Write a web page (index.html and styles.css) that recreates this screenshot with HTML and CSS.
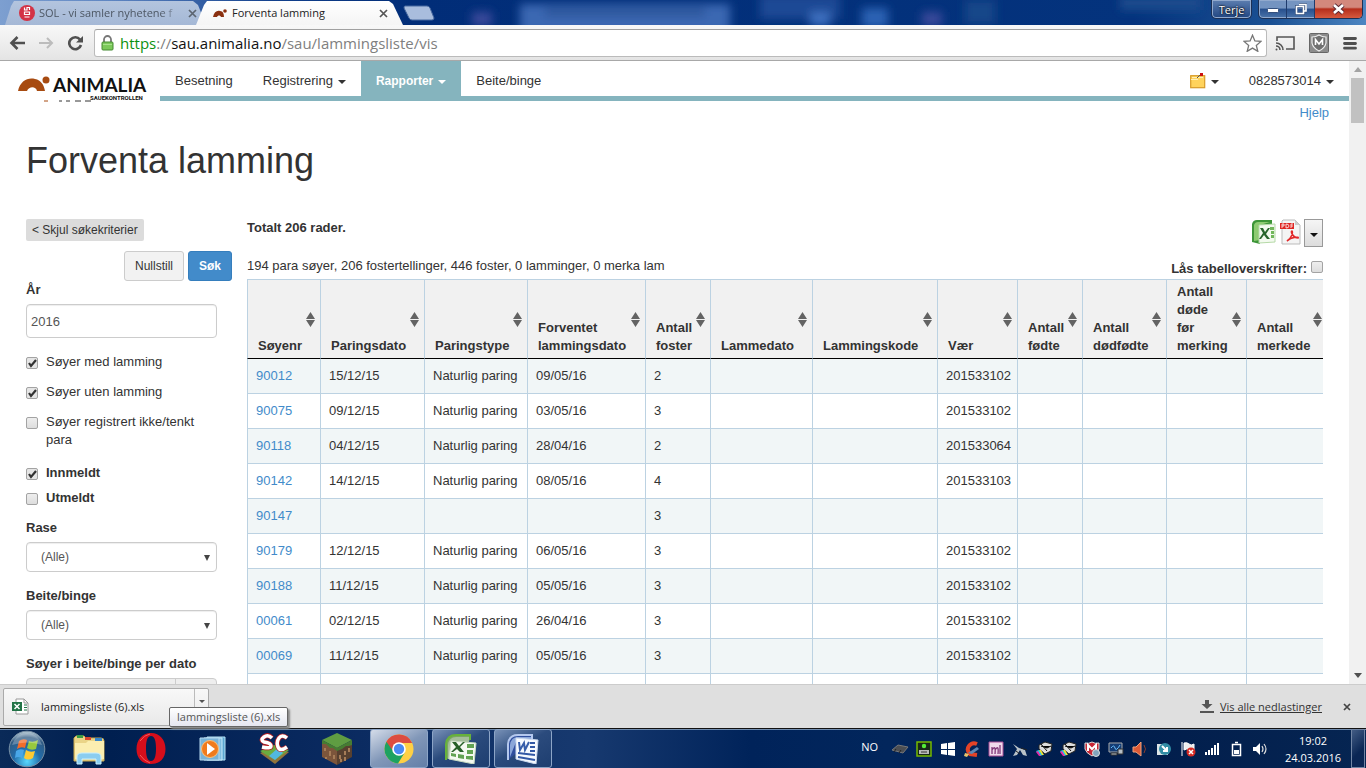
FILE: index.html
```html
<!DOCTYPE html>
<html lang="no">
<head>
<meta charset="utf-8">
<title>Forventa lamming</title>
<link rel="stylesheet" href="styles.css">
</head>
<body>
<header class="titlebar">
  <svg class="glass" viewBox="0 0 1366 25" preserveAspectRatio="none" aria-hidden="true">
    <defs>
      <filter id="soft" x="-20%" y="-50%" width="140%" height="200%"><feGaussianBlur stdDeviation="5"/></filter>
      <linearGradient id="sky"><stop offset="0" stop-color="#7d9fd0"/><stop offset=".08" stop-color="#5f86c2"/><stop offset=".2" stop-color="#12408c"/><stop offset=".3" stop-color="#012d78"/><stop offset=".83" stop-color="#04337d"/><stop offset=".93" stop-color="#1a5093"/><stop offset="1" stop-color="#4d86c2"/></linearGradient>
    </defs>
    <rect width="1366" height="25" fill="url(#sky)"/>
    <g filter="url(#soft)">
      <rect x="520" y="4" width="210" height="30" fill="#3a68b2"/>
      <rect x="545" y="8" width="160" height="8" fill="#2a5298"/>
      <rect x="760" y="-5" width="80" height="24" fill="#1d4a95"/>
      <rect x="472" y="12" width="20" height="14" fill="#3b4a9b"/>
      <rect x="810" y="12" width="20" height="14" fill="#3c70c0"/>
      <rect x="862" y="8" width="26" height="20" fill="#2c62b4"/>
      <rect x="922" y="12" width="20" height="14" fill="#3b4a9b"/>
      <rect x="1120" y="-4" width="80" height="14" fill="#1b4b8d"/>
      <rect x="965" y="0" width="30" height="24" fill="#174689"/>
    </g>
  </svg>
  <div class="tabs">
    <div class="tab">
      <svg width="16" height="16" viewBox="0 0 16 16"><circle cx="8" cy="8" r="8" fill="#d33245"/><g fill="none" stroke="#fff" stroke-width="1.200"><path d="M5.500 2.500v2.500h2.500V2.500h2.500V5M5.500 7h5v2.500h-5zM5.500 12h5"/></g></svg>
      <span class="tab-title fade">SOL - vi samler nyhetene f</span>
      <button class="tab-close" aria-label="Lukk fane"><svg width="9" height="9" viewBox="0 0 9 9"><path d="M1 1l7 7M8 1L1 8" stroke="#5b6470" stroke-width="1.700"/></svg></button>
    </div>
    <div class="tab current">
      <svg width="14" height="16" viewBox="0 0 14 16"><path d="M0 12C1 7 4 5 7 6c3 0 4 3 4 6H8c-1-2-3-2-4 0z" fill="#8a3010"/><circle cx="12" cy="6" r="1.800" fill="#8a3010"/></svg>
      <span class="tab-title">Forventa lamming</span>
      <button class="tab-close" aria-label="Lukk fane"><svg width="9" height="9" viewBox="0 0 9 9"><path d="M1 1l7 7M8 1L1 8" stroke="#555" stroke-width="1.700"/></svg></button>
    </div>
    <button class="newtab" aria-label="Ny fane"><svg width="32" height="16" viewBox="0 0 32 16"><path d="M2 1h22q2 0 3 2l4 10q0 2-2 2H9q-2 0-3-2L1 3q0-2 1-2z" fill="#a9bddd" stroke="#47689f"/></svg></button>
  </div>
  <div class="window-buttons">
    <button class="user">Terje</button>
    <div class="group">
      <button aria-label="Minimer"><svg width="12" height="12" viewBox="0 0 12 12"><rect x=".5" y="5.500" width="11" height="4" rx="1" fill="#fff" stroke="#334f7d"/></svg></button>
      <button aria-label="Gjenopprett"><svg width="12" height="12" viewBox="0 0 12 12"><path d="M4 1h7v7H9M1.500 3.500h7v7h-7z" fill="none" stroke="#334f7d" stroke-width="3"/><path d="M4 1.500h7V8H9M1.500 3.500h7v7h-7z" fill="none" stroke="#fff" stroke-width="1.600"/></svg></button>
      <button class="close" aria-label="Lukk"><svg width="13" height="12" viewBox="0 0 13 12"><path d="M2 2l9 8M11 2L2 10" stroke="#5a2b35" stroke-width="4.500"/><path d="M2 2l9 8M11 2L2 10" stroke="#fff" stroke-width="2.600"/></svg></button>
    </div>
  </div>
</header>

<div class="toolbar">
  <button aria-label="Tilbake"><svg width="17" height="16" viewBox="0 0 17 16"><path d="M16 8H3M8.500 2L2.500 8l6 6" fill="none" stroke="#505050" stroke-width="2.600"/></svg></button>
  <button aria-label="Frem"><svg width="17" height="16" viewBox="0 0 17 16"><path d="M1 8h13M9 3l5 5-5 5" fill="none" stroke="#bcbcbc" stroke-width="2"/></svg></button>
  <button aria-label="Last inn på nytt"><svg width="17" height="16" viewBox="0 0 17 16"><path d="M13 4.500A6 6 0 1 0 14 10" fill="none" stroke="#505050" stroke-width="2.600"/><path d="M9 7.500h7V1z" fill="#505050"/></svg></button>
  <div class="omnibox">
    <svg width="13" height="16" viewBox="0 0 13 16"><path d="M3 8V4.500a3.500 3.500 0 0 1 7 0V8" fill="none" stroke="#777" stroke-width="1.800"/><rect x="1" y="7" width="11" height="8" rx="1" fill="#7cc95b" stroke="#448a32"/><path d="M2 9.500h9" stroke="#a9e18e"/></svg>
    <div class="url"><span class="secure">https</span>://<span class="host">sau.animalia.no</span>/sau/lammingsliste/vis</div>
    <button aria-label="Bokmerk"><svg width="19" height="18" viewBox="0 0 19 18"><path d="M9.500 1.200l2.400 5.700 6 .5-4.600 4 1.500 5.900-5.300-3.200-5.300 3.200 1.500-5.900-4.600-4 6-.5z" fill="#fff" stroke="#767676" stroke-width="1.300"/></svg></button>
  </div>
  <div class="extensions">
    <button aria-label="Cast"><svg width="20" height="16" viewBox="0 0 20 16"><path d="M2 6V2h17v12h-8" fill="none" stroke="#555" stroke-width="1.600"/><path d="M1 8a7 7 0 0 1 7 7M1 11a4 4 0 0 1 4 4" fill="none" stroke="#555" stroke-width="1.600"/><circle cx="1.500" cy="14.500" r="1" fill="#555"/></svg></button>
    <button aria-label="McAfee"><svg width="20" height="20" viewBox="0 0 20 20"><rect x=".5" y=".5" width="19" height="19" rx="1" fill="#8c8c8c" stroke="#666"/><path d="M3 4q4 0 7-2 3 2 7 2v6q-1 5-7 8-6-3-7-8z" fill="#707070" stroke="#eee" stroke-width="1.200"/><path d="M6.500 12V6.500l3.500 4.500 3.500-4.500V12" fill="none" stroke="#fff" stroke-width="1.600"/></svg></button>
    <button aria-label="Meny"><svg width="14" height="14" viewBox="0 0 14 14"><path d="M1.500 2.500h11M1.500 7.500h11M1.500 12.200h11" stroke="#4f4f4f" stroke-width="2.800" stroke-linecap="round"/></svg></button>
  </div>
</div>

<div class="viewport">
  <div class="page">
    <div class="topnav">
      <a class="logo" href="#" aria-label="Animalia Sauekontrollen">
        <svg width="150" height="41" viewBox="0 0 150 41"><path d="M17 30C19 20 27 16 34 18c6 1 9 6 10 12h-8c-1-5-8-5-10 0z" fill="#a74b11"/><circle cx="45" cy="19" r="3.500" fill="#a74b11"/><text x="52" y="31" class="logo-name">ANIMALIA</text><text x="89" y="39" class="logo-sub">SAUEKONTROLLEN</text><path d="M43 40h4" stroke="#a74b11"/><path d="M58 40h3m4 0h4m5 0h6m4 0h6" stroke="#333"/></svg>
      </a>
      <nav>
        <a href="#">Besetning</a>
        <a href="#">Registrering <i class="caret"></i></a>
        <a href="#" class="active">Rapporter <i class="caret"></i></a>
        <a href="#">Beite/binge</a>
        <a href="#" class="notes" aria-label="Notater"><svg width="16" height="17" viewBox="0 0 16 17"><rect x=".7" y="3.700" width="14" height="12" fill="#ffd35c" stroke="#d89b27" stroke-width="1.200"/><path d="M2 5.500h11M1 7.500h7" stroke="#fff0b5"/><path d="M7 6l3-3" stroke="#555"/><rect x="10" y="1" width="3" height="3" fill="#c11"/></svg><i class="caret"></i></a>
        <a href="#">0828573014 <i class="caret"></i></a>
      </nav>
    </div>
    <div class="help"><a href="#">Hjelp</a></div>
    <h1>Forventa lamming</h1>
    <div class="columns">
      <form class="search">
        <button type="button" class="hide">&lt; Skjul søkekriterier</button>
        <div class="actions"><button type="button" class="btn">Nullstill</button><button type="button" class="btn primary">Søk</button></div>
        <label class="title" for="year">År</label>
        <input class="field" id="year" type="text" value="2016">
        <div class="checks">
          <label><input type="checkbox" checked><span>Søyer med lamming</span></label>
          <label><input type="checkbox" checked><span>Søyer uten lamming</span></label>
          <label><input type="checkbox"><span>Søyer registrert ikke/tenkt para</span></label>
        </div>
        <div class="checks strong">
          <label><input type="checkbox" checked><span>Innmeldt</span></label>
          <label><input type="checkbox"><span>Utmeldt</span></label>
        </div>
        <label class="title" for="breed">Rase</label>
        <select class="field" id="breed"><option>(Alle)</option></select>
        <label class="title" for="pasture">Beite/binge</label>
        <select class="field" id="pasture"><option>(Alle)</option></select>
        <label class="title" for="date">Søyer i beite/binge per dato</label>
        <div class="date"><input id="date" type="text"><button type="button" aria-label="Velg dato"></button></div>
      </form>
      <main>
        <div class="total">
          <strong>Totalt 206 rader.</strong>
          <div class="exports">
            <button aria-label="Excel"><svg width="25" height="26" viewBox="0 0 25 26"><path d="M1 5q1-4 5-4h15v4L9 7v18l-8-2z" fill="#3d9538"/><path d="M3 6q1-3 4-3h12l-10 3v15l-6 1z" fill="#8ecb72"/><path d="M8 6l16-1v18L8 24z" fill="#f3faef" stroke="#b5d9a7"/><path d="M9 9h3l2 4 3-4h2l-4 6 4 5h-3l-3-4-3 4H8l4-6z" fill="#28652c"/><path d="M19 8h4v3h-4zm1 4h3v3h-3zm0 4h3v3h-3z" fill="#72b75b"/></svg></button>
            <button aria-label="PDF"><svg width="22" height="26" viewBox="0 0 22 26"><path d="M4 1h12l5 5v19H3V2z" fill="#f4f4f4" stroke="#bbb"/><path d="M16 1v5h5z" fill="#ccc"/><rect x="1" y="4" width="14" height="6" fill="#df2522"/><path d="M3 9V5h2v2H3m4 2V5q3 0 3 2t-3 2m5 0V5h2m-2 2h2" fill="none" stroke="#fff" stroke-width=".8"/><path d="M8 22c5-3 6-9 5-10-2 0 1 7 6 7 2-1-6-2-11 3z" fill="none" stroke="#e1292b" stroke-width="1.500"/></svg></button>
            <button class="more" aria-label="Flere valg"><i class="caret"></i></button>
          </div>
        </div>
        <div class="summary"><span>194 para søyer, 206 fostertellinger, 446 foster, 0 lamminger, 0 merka lam</span><label>Lås tabelloverskrifter: <input type="checkbox"></label></div>
        <div class="table-wrap">
        <table>
          <colgroup><col class="w73"><col class="w104"><col class="w103"><col class="w118"><col class="w65"><col class="w102"><col class="w125"><col class="w80"><col class="w65"><col class="w84"><col class="w80"><col class="w81"></colgroup>
          <thead><tr><th>Søyenr</th><th>Paringsdato</th><th>Paringstype</th><th>Forventet lammingsdato</th><th>Antall foster</th><th>Lammedato</th><th>Lammingskode</th><th>Vær</th><th>Antall fødte</th><th>Antall dødfødte</th><th>Antall<br>døde<br>før<br>merking</th><th>Antall merkede</th></tr></thead>
          <tbody>
            <tr><td><a href="#">90012</a></td><td>15/12/15</td><td>Naturlig paring</td><td>09/05/16</td><td>2</td><td></td><td></td><td>201533102</td><td></td><td></td><td></td><td></td></tr>
            <tr><td><a href="#">90075</a></td><td>09/12/15</td><td>Naturlig paring</td><td>03/05/16</td><td>3</td><td></td><td></td><td>201533102</td><td></td><td></td><td></td><td></td></tr>
            <tr><td><a href="#">90118</a></td><td>04/12/15</td><td>Naturlig paring</td><td>28/04/16</td><td>2</td><td></td><td></td><td>201533064</td><td></td><td></td><td></td><td></td></tr>
            <tr><td><a href="#">90142</a></td><td>14/12/15</td><td>Naturlig paring</td><td>08/05/16</td><td>4</td><td></td><td></td><td>201533103</td><td></td><td></td><td></td><td></td></tr>
            <tr><td><a href="#">90147</a></td><td></td><td></td><td></td><td>3</td><td></td><td></td><td></td><td></td><td></td><td></td><td></td></tr>
            <tr><td><a href="#">90179</a></td><td>12/12/15</td><td>Naturlig paring</td><td>06/05/16</td><td>3</td><td></td><td></td><td>201533102</td><td></td><td></td><td></td><td></td></tr>
            <tr><td><a href="#">90188</a></td><td>11/12/15</td><td>Naturlig paring</td><td>05/05/16</td><td>3</td><td></td><td></td><td>201533102</td><td></td><td></td><td></td><td></td></tr>
            <tr><td><a href="#">00061</a></td><td>02/12/15</td><td>Naturlig paring</td><td>26/04/16</td><td>3</td><td></td><td></td><td>201533102</td><td></td><td></td><td></td><td></td></tr>
            <tr><td><a href="#">00069</a></td><td>11/12/15</td><td>Naturlig paring</td><td>05/05/16</td><td>3</td><td></td><td></td><td>201533102</td><td></td><td></td><td></td><td></td></tr>
            <tr><td></td><td></td><td></td><td></td><td></td><td></td><td></td><td></td><td></td><td></td><td></td><td></td></tr>
          </tbody>
        </table>
        </div>
      </main>
    </div>
  </div>
  <div class="scrollbar" aria-hidden="true">
    <svg width="17" height="17" viewBox="0 0 17 17"><path d="M5 11l4-5 4 5z" fill="#a3a3a3"/></svg>
    <div class="thumb"></div>
    <svg class="down" width="17" height="17" viewBox="0 0 17 17"><path d="M5 6l4 5 4-5z" fill="#505050"/></svg>
  </div>
</div>

<div class="downloads">
  <div class="download">
    <button class="file"><svg width="17" height="17" viewBox="0 0 17 17"><path d="M4 1h8l4 4v11H4z" fill="#fff" stroke="#999"/><path d="M12 1v4h4" fill="none" stroke="#999"/><path d="M12 7h3m-3 2.500h3M12 12h3" stroke="#217346"/><rect y="4" width="10" height="9" fill="#217346"/><path d="M2.500 6l5 5m0-5l-5 5" stroke="#fff" stroke-width="1.500"/></svg>lammingsliste (6).xls</button>
    <button class="drop" aria-label="Meny"><i class="caret small"></i></button>
    <div class="tooltip" role="tooltip">lammingsliste (6).xls</div>
  </div>
  <a class="show-all" href="#"><svg width="14" height="13" viewBox="0 0 14 13"><path d="M5 0h4v4h3.500L7 9 1.500 4H5zM0 11h14v2H0z" fill="#555"/></svg><span>Vis alle nedlastinger</span></a>
  <button class="dismiss" aria-label="Lukk"><svg width="8" height="8" viewBox="0 0 8 8"><path d="M1 1l6 6M7 1L1 7" stroke="#444" stroke-width="1.700"/></svg></button>
</div>

<footer class="taskbar">
  <button class="start" aria-label="Start"><svg width="38" height="38" viewBox="0 0 38 38"><defs><radialGradient id="orb" cx=".5" cy=".85" r=".85"><stop offset="0" stop-color="#58d8ff"/><stop offset=".45" stop-color="#226ba8"/><stop offset=".8" stop-color="#315b83"/><stop offset="1" stop-color="#c4d5df"/></radialGradient></defs><circle cx="19" cy="19" r="17.800" fill="url(#orb)" stroke="#7890a5"/><path d="M11 11q4-3 8-1l-2 8q-4-2-8 1z" fill="#f26c2a"/><path d="M21 11q4 2 9-1l-2 9q-5 2-9-1z" fill="#97c93e"/><path d="M8 21q4-3 8-1l-2 8q-4-2-7 0z" fill="#49a7e8"/><path d="M18 20q4 3 9 1l-2 7q-5 3-9 0z" fill="#ffca32"/><path d="M4 15Q8 3 19 3t15 12q-15-5-30 0z" fill="#fff" opacity=".25"/></svg></button>
  <div class="apps">
    <button aria-label="Utforsker"><svg width="34" height="32" viewBox="0 0 34 32"><path d="M2 5l2-2h8l2 2h15q3 0 3 3v20H2z" fill="#ead487" stroke="#c7a850"/><rect x="5" y="2" width="6" height="3" fill="#3a9b43"/><rect x="13" y="4" width="6" height="3" fill="#d6452d"/><rect x="23" y="5" width="7" height="3" fill="#3685ca"/><path d="M3 10h11l2-2h16v18H3z" fill="#fbeeb0"/><path d="M5 31v-7q0-4 5-4h14q5 0 5 4v7h-5v-5H10v5z" fill="#8bcdf0" stroke="#c9efff"/></svg></button>
    <button aria-label="Opera"><svg width="30" height="32" viewBox="0 0 30 32"><path fill-rule="evenodd" d="M15 0C6 0 .5 7 .5 16S6 31 15 31s14.500-6 14.500-15S24 0 15 0zm0 3c4 0 5 6 5 12.500S19 28 15 28s-5-6-5-12.500S11 3 15 3z" fill="#d60e1b"/><path d="M4 8Q8 2 14 1M4 22q4 6 10 8" fill="none" stroke="#f65a5a"/></svg></button>
    <button aria-label="Media Player"><svg width="28" height="28" viewBox="0 0 28 28"><path d="M8 2h18v23H8z" fill="#5ba6d0" stroke="#b8e4f7"/><path d="M5 3h18v22H5z" fill="#80bddf" stroke="#c9ebfa"/><path d="M1 3h19v22H1z" fill="#78b3d8" stroke="#b8daf0"/><circle cx="11" cy="14" r="8.500" fill="#f07b1d" stroke="#fac17c"/><path d="M8 8l8 6-8 6z" fill="#fff"/></svg></button>
    <button aria-label="SimCity"><svg width="32" height="32" viewBox="0 0 32 32"><path d="M1 20l14-6 15 5-14 12z" fill="#8f743c"/><path d="M1 18l14-6 15 5-14 10z" fill="#69ad3f"/><path d="M10 23l9-8 5 5-8 7z" fill="#51b8df"/><path d="M13 5Q9 1 5 4t0 5q7 1 7 4t-9 1M28 5q-5-4-8 0t-1 9 9 0" fill="none" stroke="#b81e20" stroke-width="5"/><path d="M13 5Q9 1 5 4t0 5q7 1 7 4t-9 1M28 5q-5-4-8 0t-1 9 9 0" fill="none" stroke="#fff" stroke-width="3.500"/></svg></button>
    <button aria-label="Minecraft"><svg width="32" height="32" viewBox="0 0 32 32"><path d="M1 8l15 7v17L1 24z" fill="#7c553b"/><path d="M16 15l15-7v16l-15 8z" fill="#58402f"/><path d="M1 7l15-7 15 7-15 8z" fill="#5f9d42"/><path d="M1 7l15 8 15-8v5l-3 1-3 0-4 3-5 2-4-3-3 0-4-4-4 0z" fill="#477c32"/><path d="M4 15v3m5 0v5m4-1v4m-8 0v-2m14-2v4m5-8v4m4-7v4m-8 7v3m4-5v4" stroke="#a67c57" stroke-width="2"/></svg></button>
    <button class="open focused" aria-label="Chrome"><svg width="30" height="30" viewBox="0 0 30 30"><circle cx="15" cy="15" r="14.500" fill="#ffd044"/><path d="M15 15L2.400 7.800A14.500 14.500 0 0 0 14 29.500L21 18z" fill="#1da261"/><path d="M2.400 7.800A14.500 14.500 0 0 1 28.200 9H15a6 6 0 0 0-6 8z" fill="#dc4c40"/><circle cx="15" cy="15" r="6.800" fill="#fff"/><circle cx="15" cy="15" r="5.200" fill="#4a8af4"/></svg></button>
    <button class="open" aria-label="Excel"><svg width="32" height="30" viewBox="0 0 32 30"><path d="M1 26V10Q2 1 11 1h14v5" fill="#79a663" stroke="#67b23a" stroke-width="2"/><path d="M3 25V11q1-8 8-8h13v5H9v17z" fill="#a4be9a"/><path d="M6 7l25 2-2 21-25-5z" fill="#f5f9f1" stroke="#c8dbc2"/><path d="M7 8h4l3 4 4-4h2l-5 5 4 5h-4l-3-3-4 3H6l5-5z" fill="#286128"/><path d="M22 10h7v4h-7zm0 6h6v4h-6zm-1 6h7v4l-7-1zM13 20l6 1v4l-6-1zm-7-1l5 1v3l-5-1z" fill="#63a353"/></svg></button>
    <button class="open" aria-label="Word"><svg width="32" height="30" viewBox="0 0 32 30"><path d="M1 26V10Q2 1 11 1h14v5" fill="#304f9e" stroke="#b4c8ee" stroke-width="2"/><path d="M3 23V11q1-8 8-8h13v3L9 8z" fill="#8ba7d9"/><path d="M9 4l22 2-2 24-20-5z" fill="#f6faff" stroke="#ccdaef"/><path d="M12 8l1 8 4-7 1 7 4-8" fill="none" stroke="#365da9" stroke-width="2"/><path d="M23 9h5m-5 4h5m-5 4h5M11 19l17 2m-17 2l17 3" stroke="#3258a5" stroke-width="2"/></svg></button>
  </div>
  <div class="tray">
    <span class="lang">NO</span>
    <div class="icons">
      <svg viewBox="0 0 16 16"><path d="M0 9l6-5 10 2-5 6z" fill="#4b4e53" stroke="#777"/><path d="M2 11l2-3m3 4l2-3" stroke="#222"/></svg>
      <svg viewBox="0 0 16 16"><rect x="1" y="1" width="14" height="14" fill="#182818" stroke="#76b900" stroke-width="1.500"/><path d="M3 9h10v4H3z" fill="#bbb"/><path d="M5 11h6" stroke="#333"/><circle cx="8" cy="5" r="2.200" fill="#54ed38"/></svg>
      <svg viewBox="0 0 16 16"><path d="M1 3l6-1v6H1zm7-1l7-1v7H8zM1 9h6v5l-6-1zm7 0h7v6l-7-1z" fill="#fff"/></svg>
      <svg viewBox="0 0 16 16"><path d="M13 3Q8 1 5 5t1 8l7 1" fill="none" stroke="#e24327" stroke-width="4"/><path d="M4 12L13 6l2 2-7 5z" fill="#5c87b3"/><path d="M1 12l4 1-2 3-3-1z" fill="#e7c46c"/></svg>
      <svg viewBox="0 0 16 16"><path d="M1 1h14v14H1z" fill="#f0d9ec" stroke="#a74d95"/><path d="M4 13V6m0 3q4-6 3 4m0-4q4-6 3 4m2-9v9" fill="none" stroke="#803779" stroke-width="1.300"/></svg>
      <svg viewBox="0 0 16 16"><path d="M1 3l6 4 6 2 2 6-4-1-3-5-3 5-4 1 4-7z" fill="#b9c2c8"/><path d="M9 7l6 2M4 10l4 3" stroke="#222"/></svg>
      <svg viewBox="0 0 16 16"><path d="M3 4l6-3 7 2-1 7-6 3-6-5z" fill="#ddd" stroke="#222"/><path d="M5 5l6 2 4-2M5 3l6 7" stroke="#111"/><path d="M0 10l4 5 3-1-4-5z" fill="#21d2e8"/><path d="M0 11l3 4h2l-3-5z" fill="#e429a5"/><path d="M3 9l3 5h2l-3-5z" fill="#f2e431"/></svg>
      <svg viewBox="0 0 16 16"><path d="M3 4l6-3 7 2-1 7-6 3-6-5z" fill="#ddd" stroke="#222"/><path d="M5 5l6 2 4-2M5 3l6 7" stroke="#111"/><path d="M0 10l4 5 3-1-4-5z" fill="#21d2e8"/><path d="M0 11l3 4h2l-3-5z" fill="#e429a5"/><path d="M3 9l3 5h2l-3-5z" fill="#f2e431"/></svg>
      <svg viewBox="0 0 16 16"><path d="M1 2q4 1 7-1 3 2 7 1v6q-1 4-7 7-6-3-7-7z" fill="#c72635" stroke="#ddd"/><path d="M4 10V4l4 4 4-4v6" fill="none" stroke="#fff" stroke-width="2"/><circle cx="12" cy="12" r="3.500" fill="#83a5bd" stroke="#ddd"/></svg>
      <svg viewBox="0 0 16 16"><path d="M1 2h13v9H1z" fill="#143c74" stroke="#aaa"/><path d="M3 7q3-4 4 0t5-3" stroke="#69bfff" fill="none"/><path d="M10 8h5v5h-5zM3 12h6v2H3z" fill="#b5bec6" stroke="#333"/></svg>
      <svg viewBox="0 0 16 16"><path d="M1 6h3l5-5v14l-5-4H1z" fill="#dd5a36" stroke="#f1a17c"/><path d="M12 4q3 4 0 8" fill="none" stroke="#8a3d2f"/></svg>
      <svg viewBox="0 0 16 16"><path d="M1 3h11v11H1z" fill="#dce4e6"/><circle cx="9" cy="8" r="6" fill="#318da5"/><path d="M6 5l5 5m0-4v4H7" fill="none" stroke="#fff" stroke-width="2"/></svg>
      <svg viewBox="0 0 16 16"><path d="M2 1v14M4 2q3-1 5 1t5 0v7q-3 1-5-1t-5 0z" fill="#eee" stroke="#fff"/><circle cx="11" cy="11" r="4.500" fill="#d72b24"/><path d="M9 9l4 4m0-4l-4 4" stroke="#fff" stroke-width="1.500"/></svg>
      <svg viewBox="0 0 16 16"><path d="M1 11h2v3H1zm3-2h2v5H4zm3-2h2v7H7zm3-3h2v10h-2zm3-2h2v12h-2z" fill="#fff"/></svg>
      <svg viewBox="0 0 16 16"><path d="M4.500 3.500h8v11h-8zM7 1.500h3" fill="none" stroke="#fff" stroke-width="1.500"/><path d="M6 9h5v4H6z" fill="#fff"/></svg>
      <svg viewBox="0 0 16 16"><path d="M1 6h3l4-4v12l-4-4H1z" fill="#fff"/><path d="M10 5q2 3 0 6m2-8q4 5 0 10" fill="none" stroke="#ddd" stroke-width="1.200"/></svg>
    </div>
    <div class="clock">19:02<br>24.03.2016</div>
    <button class="desktop" aria-label="Vis skrivebord"></button>
  </div>
</footer>
</body>
</html>
```

FILE: styles.css
```css
* { box-sizing: border-box; }
html, body { height: 100%; }
body { margin: 0; display: flex; flex-direction: column; overflow: hidden; background: #fff; color: #333; font: 13px/18px "Liberation Sans", Arial, sans-serif; }
button { padding: 0; border: 0; background: none; font: inherit; color: inherit; }
a { color: #428bca; text-decoration: none; }
svg { flex: none; display: block; }
.titlebar, .toolbar, .downloads, .taskbar { font-family: "Open Sans", "Noto Sans", sans-serif; font-size: 11px; flex: none; }

.titlebar { position: relative; height: 25px; display: flex; justify-content: space-between; align-items: flex-start; overflow: hidden; background: #012d78; }
.glass { position: absolute; inset: 0; width: 100%; height: 100%; }
.tabs { position: relative; display: flex; padding: 1px 0 0 5px; }
.tab { display: flex; align-items: center; width: 204px; height: 24px; padding: 0 11px 0 14px; gap: 4px; color: #4c5663; background: linear-gradient(#b3c4de, #a5b8d6); clip-path: polygon(9px 0, 188px 0, 193px 4px, 201px 100%, 0 100%, 6px 5px); }
.tab.current { width: 207px; margin-left: -13px; padding: 0 14px 0 17px; gap: 5px; background: linear-gradient(#fff, #f5f5f5); color: #222; clip-path: polygon(11px 0, 193px 0, 197px 3px, 207px 100%, 0 100%, 8px 4px); }
.tab-title { flex: 1; overflow: hidden; white-space: nowrap; }
.fade { mask-image: linear-gradient(90deg, #000 85%, transparent); }
.tab-close { width: 12px; display: grid; place-items: center; }
.newtab { margin-top: 4px; align-self: flex-start; }
.window-buttons { position: relative; display: flex; gap: 6px; padding-right: 3px; }
.user, .group { height: 19px; border: 1px solid #1c3055; border-top: 0; border-radius: 0 0 5px 5px; box-shadow: inset 0 0 0 1px #91a9cd; overflow: hidden; }
.user { width: 41px; color: #fff; line-height: 17px; text-shadow: 0 0 2px #000, 0 0 2px #000; background: linear-gradient(#5d7eb0, #214682); }
.group { display: flex; width: 105px; background: linear-gradient(#7494c1 45%, #274f8c 50%, #4a74ab); }
.group button { width: 28px; display: grid; place-items: center; border-right: 1px solid #1f3b6c; }
.group .close { flex: 1; border: 0; background: linear-gradient(#d3887c 40%, #b52e1c 50%, #d65a3f); }

.toolbar { height: 36px; display: flex; align-items: center; gap: 12px; padding: 0 9px; background: linear-gradient(#f8f8f8, #e4e4e4); border-bottom: 1px solid #a8a8a8; }
.omnibox { flex: 1; height: 28px; display: flex; align-items: center; gap: 6px; padding: 0 4px 0 6px; margin-left: -2px; background: #fff; border: 1px solid #bbb; border-top-color: #a0a0a0; border-radius: 3px; }
.url { flex: 1; font-size: 15px; line-height: 24px; color: #808080; }
.secure { color: #0b9110; }
.host { color: #111; }
.extensions { display: flex; align-items: center; gap: 14px; margin-left: -4px; }

.viewport { flex: 1; min-height: 0; display: flex; overflow: hidden; }
.page { flex: 1; min-width: 0; overflow: hidden; }
.topnav { display: flex; height: 40px; }
.logo { flex: none; width: 160px; padding-left: 1px; }
.logo-name { font: bold 19px Lato, sans-serif; fill: #111; }
.logo-sub { font: bold 6px Roboto, sans-serif; fill: #111; }
nav { flex: 1; display: flex; border-bottom: 5px solid #85b4be; }
nav a { display: flex; align-items: center; gap: 5px; padding: 4px 15px 0; color: #333; }
nav .active { background: #85b4be; color: #fff; font-size: 12px; font-weight: bold; }
nav .notes { margin-left: auto; }
.caret { display: inline-block; border: 4px solid transparent; border-top-color: currentColor; border-bottom: 0; margin-top: 3px; }
.caret.small { border-width: 3px; border-bottom: 0; margin: 0; }
.help { padding: 3px 20px 0 0; text-align: right; }
h1 { margin: 0; padding: 18px 26px 37px; font-size: 36px; line-height: 42px; font-weight: normal; }
.columns { display: flex; gap: 15px; padding: 0 26px; }
.search { flex: none; width: 206px; }
.hide { display: block; height: 22px; margin-bottom: 10px; padding: 0 6px; background: #dcdcdc; border-radius: 2px; font-size: 12px; line-height: 22px; }
.actions { display: flex; justify-content: flex-end; gap: 4px; }
.btn { height: 30px; padding: 0 10px; border: 1px solid #ccc; border-radius: 3px; background: #f2f2f2; font-size: 12px; }
.btn.primary { background: #428bca; border-color: #357ebd; color: #fff; font-weight: bold; }
.title { display: block; margin-bottom: 5px; font-weight: bold; }
.field { display: block; width: 191px; height: 34px; padding: 0 4px; border: 1px solid #ccc; border-radius: 4px; background: #fff; color: #555; font: inherit; box-shadow: inset 0 1px 1px #eee; }
select.field { appearance: none; height: 30px; margin-bottom: 15px; padding-left: 14px; font-size: 12px; background: #fff url("data:image/svg+xml,%3Csvg xmlns='http://www.w3.org/2000/svg' width='6' height='7'%3E%3Cpath d='M0 1h6L3 7z' fill='%23444'/%3E%3C/svg%3E") no-repeat right 6px center; }
.checks { display: grid; gap: 12px; padding: 15px 0; }
.checks label { display: flex; gap: 8px; width: 191px; }
.checks.strong { gap: 7px; padding: 0 0 12px; font-weight: bold; }
input[type="checkbox"] { appearance: none; flex: none; width: 12px; height: 12px; margin: 4px 0 0; border: 1px solid #a3a3a3; border-radius: 2px; background: linear-gradient(#eee, #ddd); }
input[type="checkbox"]:checked { background: #e5e5e5 url("data:image/svg+xml,%3Csvg xmlns='http://www.w3.org/2000/svg' width='10' height='10'%3E%3Cpath d='M2 5l2 3 5-6' fill='none' stroke='%23333' stroke-width='2.200'/%3E%3C/svg%3E") center; }
.date { display: flex; width: 191px; height: 34px; border: 1px solid #ccc; border-radius: 4px; background: #eee; }
.date input { flex: 1; min-width: 0; border: 0; background: none; }
.date button { width: 41px; border-left: 1px solid #ccc; }

main { flex: 1; min-width: 0; }
.total { display: flex; justify-content: space-between; height: 38px; }
.exports { display: flex; align-items: flex-start; gap: 3px; }
.more { width: 19px; height: 28px; display: grid; place-items: center; border: 1px solid #999; background: linear-gradient(#f5f5f5, #ddd); color: #111; }
.summary { display: flex; justify-content: space-between; height: 22px; }
.summary label { display: flex; gap: 4px; font-weight: bold; line-height: 24px; }
.table-wrap { overflow: hidden; }
table { table-layout: fixed; width: 1080px; border-collapse: separate; border-spacing: 0; }
.w65 { width: 65px; } .w73 { width: 73px; } .w80 { width: 80px; } .w81 { width: 81px; } .w84 { width: 84px; } .w102 { width: 102px; } .w103 { width: 103px; } .w104 { width: 104px; } .w118 { width: 118px; } .w125 { width: 125px; }
th, td { border-left: 1px solid #bcd2e2; text-align: left; }
th { height: 80px; padding: 3px 14px 3px 10px; vertical-align: bottom; border-top: 1px solid #bcd2e2; border-bottom: 1px solid #000; background: #f1f1f1 url("data:image/svg+xml,%3Csvg xmlns='http://www.w3.org/2000/svg' width='9' height='15'%3E%3Cpath d='M0 7h9L4.500 0zM0 8h9l-4.500 7z' fill='%23636363'/%3E%3C/svg%3E") no-repeat right 5px center; }
td { height: 35px; padding: 0 8px; border-bottom: 1px solid #bcd2e2; white-space: nowrap; }
tbody tr:nth-child(odd) { background: #f1f6f7; }

.scrollbar { flex: none; width: 17px; display: flex; flex-direction: column; background: #f1f1f1; }
.thumb { height: 45px; margin: 0 2px; background: #c1c1c1; }
.down { margin-top: auto; }

.downloads { height: 44px; display: flex; align-items: center; padding: 0 15px 0 3px; background: #dfdfdf; border-top: 1px solid #ccc; }
.download { position: relative; display: flex; width: 206px; height: 38px; border: 1px solid #aaa; border-radius: 2px; background: linear-gradient(#f8f8f8, #e9e9e9); }
.file { flex: 1; display: flex; align-items: center; gap: 12px; padding-left: 8px; color: #222; }
.drop { display: grid; place-items: center; width: 14px; height: 26px; border-left: 1px solid #bbb; color: #555; }
.tooltip { position: absolute; left: 165px; top: 18px; z-index: 2; padding: 0 7px; border: 1px solid #666; border-radius: 2px; background: linear-gradient(#fff, #e5e6f0); box-shadow: 2px 2px 2px #888; color: #555; white-space: nowrap; }
.show-all { margin-left: auto; display: flex; align-items: center; gap: 6px; color: #333; text-decoration: underline; }
.dismiss { margin-left: 21px; }

.taskbar { height: 40px; display: flex; border-top: 1px solid #111; box-shadow: inset 0 1px #6f8bad; background: linear-gradient(90deg, #0a2a58, #001f50 8%, #0a2a60 25%, #17396f 43%, #00235a 55%, #02265c 65%, #001c4b 80%, #062552); color: #fff; }
.start { width: 54px; display: grid; place-items: center; }
.apps { display: flex; gap: 4px; margin-left: 6px; }
.apps button { width: 58px; display: grid; place-items: center; }
.apps .open { border: 1px solid #8da5c7; border-radius: 3px; background: linear-gradient(150deg, #7891b7, #2b4b7d 45%, #1e3e70); }
.apps .focused { background: linear-gradient(150deg, #d4dce9, #8197b8 50%, #647fa8); }
.tray { margin-left: auto; display: flex; align-items: center; }
.lang { margin-right: 10px; padding-bottom: 4px; }
.icons { display: flex; }
.icons svg { width: 24px; height: 16px; }
.clock { width: 79px; padding-left: 3px; text-align: center; line-height: 17px; }
.desktop { align-self: stretch; width: 14px; margin-right: 1px; border: 1px solid #7185a4; background: linear-gradient(135deg, #425c84, #0a2654 60%); }
```
